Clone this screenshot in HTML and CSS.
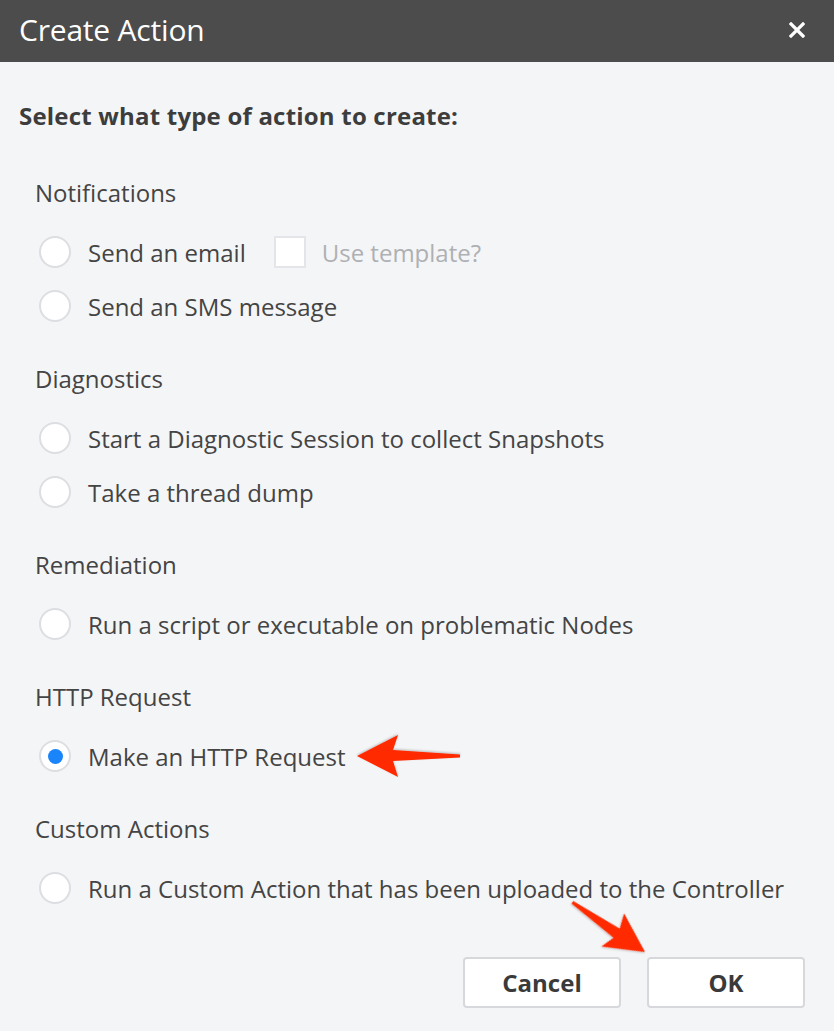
FILE: index.html
```html
<!DOCTYPE html>
<html>
<head>
<meta charset="utf-8">
<link rel="stylesheet" href="styles.css">
</head>
<body>
<div class="dialog">
  <div class="header">
    <div class="title">Create Action</div>
    <svg class="close" width="16" height="16" viewBox="0 0 16 16"><path d="M2 2 L14 14 M14 2 L2 14" stroke="#fff" stroke-width="3.2" stroke-linecap="square"/></svg>
  </div>
  <div class="body">
    <div class="prompt">Select what type of action to create:</div>

    <div class="section">
      <div class="sec-title">Notifications</div>
      <div class="option"><span class="radio"></span><span class="label">Send an email</span><span class="checkbox"></span><span class="muted">Use template?</span></div>
      <div class="option"><span class="radio"></span><span class="label">Send an SMS message</span></div>
    </div>

    <div class="section">
      <div class="sec-title">Diagnostics</div>
      <div class="option"><span class="radio"></span><span class="label">Start a Diagnostic Session to collect Snapshots</span></div>
      <div class="option"><span class="radio"></span><span class="label">Take a thread dump</span></div>
    </div>

    <div class="section">
      <div class="sec-title">Remediation</div>
      <div class="option"><span class="radio"></span><span class="label">Run a script or executable on problematic Nodes</span></div>
    </div>

    <div class="section">
      <div class="sec-title">HTTP Request</div>
      <div class="option"><span class="radio checked"></span><span class="label">Make an HTTP Request</span></div>
    </div>

    <div class="section">
      <div class="sec-title">Custom Actions</div>
      <div class="option"><span class="radio"></span><span class="label">Run a Custom Action that has been uploaded to the Controller</span></div>
    </div>

    <div class="footer">
      <button class="btn">Cancel</button>
      <button class="btn">OK</button>
    </div>
  </div>
  <svg class="arrows" width="834" height="1031" viewBox="0 0 834 1031">
    <defs>
      <filter id="sh" x="-20%" y="-20%" width="140%" height="140%">
        <feDropShadow dx="0" dy="1" stdDeviation="1" flood-color="#000" flood-opacity="0.25"/>
      </filter>
    </defs>
    <path transform="translate(357,756) rotate(180)" filter="url(#sh)" fill="#ff2a00" d="M0,0 L-41,-21 L-36,-5 L-103,-1.5 L-103,1.5 L-36,6 L-41,21 Z"/>
    <path transform="translate(645,952) rotate(34.4)" filter="url(#sh)" fill="#ff2a00" d="M0,0 L-39,-20 L-34,-5 L-88,-1.5 L-88,1.5 L-34,6 L-39,20 Z"/>
  </svg>
</div>
</body>
</html>
```

FILE: styles.css
```css
* { box-sizing: border-box; }
html, body {
  margin: 0;
  padding: 0;
  background: #f4f5f7;
}
body {
  font-family: "Open Sans", "Noto Sans", sans-serif;
  color: #444;
}
.dialog {
  position: relative;
  width: 834px;
  height: 1031px;
  overflow: hidden;
}
.header {
  height: 62px;
  background: #4c4c4c;
  display: flex;
  align-items: center;
  justify-content: space-between;
  padding: 0 29px 0 19px;
}
.title {
  color: #fff;
  font-size: 30px;
  line-height: 36px;
  letter-spacing: -0.2px;
  margin-top: -2px;
}
.close { display: block; margin-top: -2px; }
.body {
  padding: 39px 29px 0 19px;
}
.prompt {
  font-size: 24px;
  font-weight: 700;
  line-height: 30px;
  letter-spacing: 0.2px;
  color: #3d3d3d;
  margin-bottom: 47px;
}
.section {
  padding-left: 16px;
  margin-bottom: 31px;
}
.sec-title {
  font-size: 24px;
  line-height: 30px;
  margin-bottom: 17px;
  color: #444;
}
.option {
  height: 54px;
  display: flex;
  align-items: center;
  font-size: 24px;
  color: #444;
}
.radio {
  width: 32px;
  height: 32px;
  border-radius: 50%;
  border: 2px solid #dcdee2;
  background: #fff;
  margin-left: 4px;
  margin-right: 17px;
  display: flex;
  align-items: center;
  justify-content: center;
  flex: none;
}
.radio.checked::after {
  content: "";
  width: 15px;
  height: 15px;
  border-radius: 50%;
  background: #1a84fb;
}
.checkbox {
  width: 32px;
  height: 32px;
  border: 2px solid #e3e5e8;
  background: #fff;
  margin-left: 28px;
  margin-right: 16px;
  flex: none;
}
.muted { color: #aeb0b3; }
.footer {
  display: flex;
  justify-content: flex-end;
  gap: 26px;
  margin-top: 42px;
}
.btn {
  width: 158px;
  height: 51px;
  border: 2px solid #d6d8dc;
  border-radius: 4px;
  background: #fff;
  font-family: "Open Sans", "Noto Sans", sans-serif;
  font-weight: 700;
  font-size: 24px;
  color: #3a3a3a;
  padding: 0;
}
.arrows {
  position: absolute;
  left: 0;
  top: 0;
  pointer-events: none;
}
```
